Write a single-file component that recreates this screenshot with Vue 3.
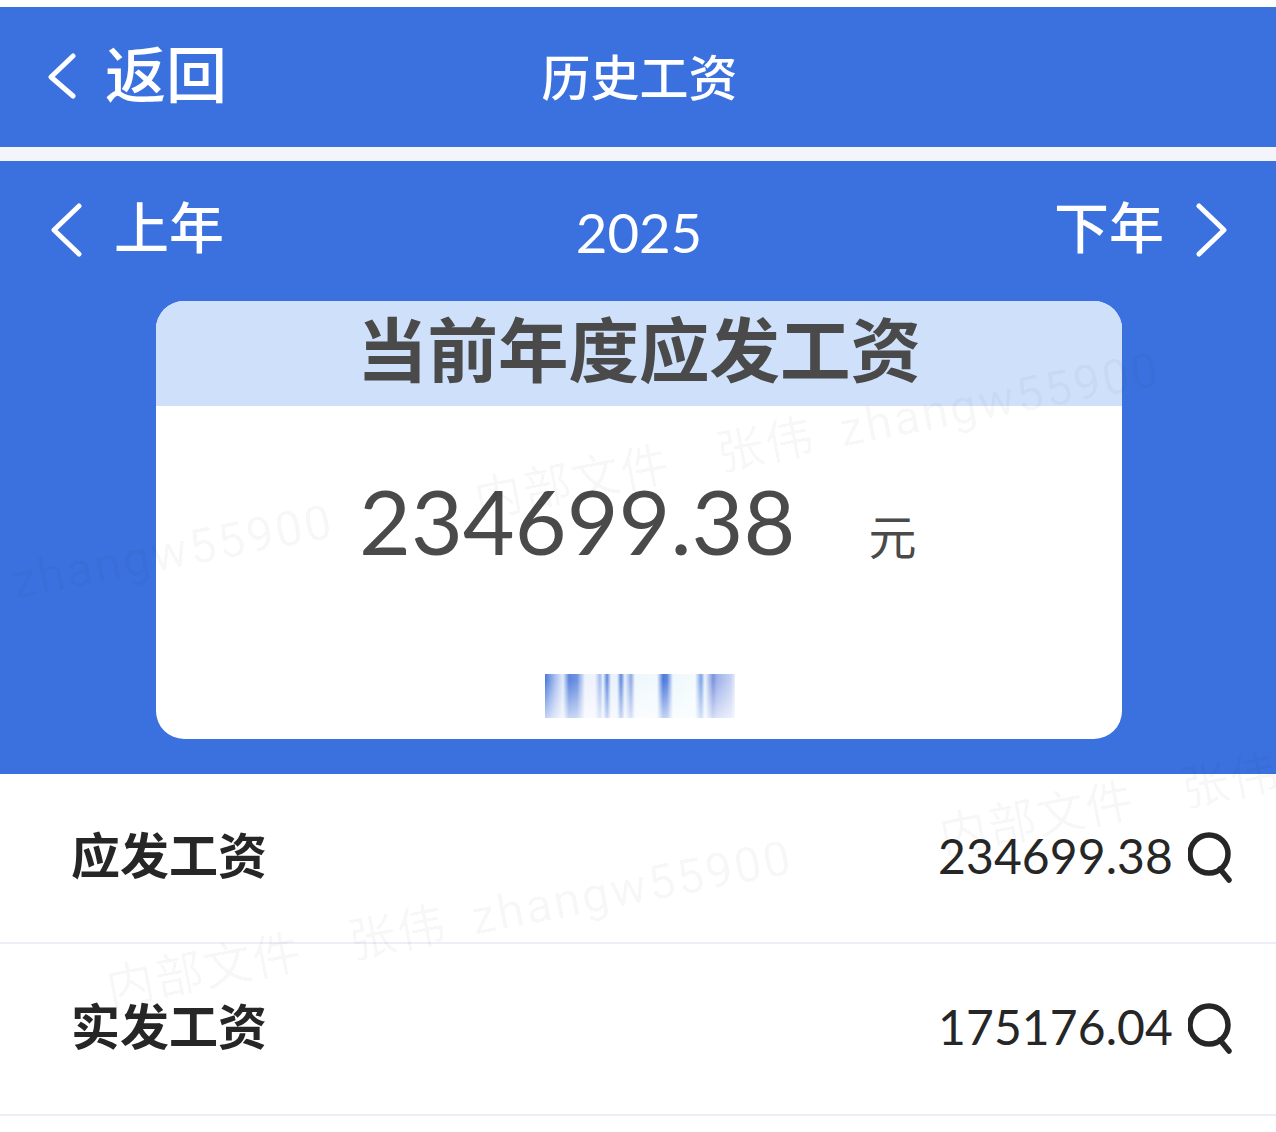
<template>
  <div class="page">
    <header class="topbar">
      <div class="back">
        <svg class="chev-sm" viewBox="0 0 30 46"><path d="M26 3 L4 24 L26 43" /></svg>
        <span>返回</span>
      </div>
      <div class="title">历史工资</div>
      <div></div>
    </header>

    <section class="hero">
      <div class="year-bar">
        <div class="year-btn">
          <svg class="chev" viewBox="0 0 34 54"><path d="M29 3 L4 27 L29 51" /></svg>
          <span>上年</span>
        </div>
        <div class="year">2025</div>
        <div class="year-btn next">
          <span>下年</span>
          <svg class="chev" viewBox="0 0 34 54"><path d="M5 3 L30 27 L5 51" /></svg>
        </div>
      </div>

      <div class="card">
        <div class="card-head">当前年度应发工资</div>
        <div class="card-amount">
          <span class="amount">234699.38</span>
          <span class="unit">元</span>
        </div>
        <div class="blurred"></div>
      </div>
    </section>

    <div class="rows">
      <div v-for="row in rows" :key="row.label" class="row">
        <span class="row-label">{{ row.label }}</span>
        <span class="row-value">
          <span class="row-num">{{ row.value }}</span>
          <svg class="search" viewBox="0 0 44 52">
            <circle cx="21" cy="22" r="19" />
            <path d="M32 37 L41 48" />
          </svg>
        </span>
      </div>
    </div>

    <div class="watermarks">
      <span
        v-for="(m, i) in marks"
        :key="i"
        class="mark"
        :style="{ left: m.x + 'px', top: m.y + 'px' }"
      >内部文件<i></i>张伟<b></b><em>zhangw55900</em></span>
    </div>
  </div>
</template>

<script setup>
const rows = [
  { label: "应发工资", value: "234699.38" },
  { label: "实发工资", value: "175176.04" },
];

const marks = [
  { x: -352, y: 624 },
  { x: 475, y: 472 },
  { x: 107, y: 960 },
  { x: 940, y: 808 },
];
</script>

<style>
html,
body {
  background: #fff;
}
</style>

<style scoped>
.page {
  position: relative;
  width: 1276px;
  height: 1132px;
  overflow: hidden;
  background: #fff;
  padding-top: 7px;
  box-sizing: border-box;
  font-family: "Lato", "Noto Sans CJK SC", sans-serif;
}
.topbar {
  height: 140px;
  background: #3b71de;
  color: #fff;
  display: grid;
  grid-template-columns: 1fr auto 1fr;
  align-items: center;
  padding: 0 47px;
  margin-bottom: 14px;
  box-shadow: 0 14px 0 #f3f5fa;
}
.back {
  display: flex;
  align-items: center;
  gap: 28px;
  font-size: 61px;
  font-weight: 500;
  line-height: 1;
  margin-top: -5px;
}
.title {
  font-size: 49px;
  font-weight: 500;
  line-height: 1;
  margin: 1px 0 0 3px;
}
.chev-sm {
  width: 30px;
  height: 46px;
  flex: none;
  margin-top: 3px;
}
.chev-sm path,
.chev path {
  fill: none;
  stroke: #fff;
  stroke-width: 5;
  stroke-linecap: round;
  stroke-linejoin: round;
}
.hero {
  height: 613px;
  background: #3b71de;
  display: flex;
  flex-direction: column;
  align-items: center;
}
.year-bar {
  align-self: stretch;
  height: 140px;
  display: flex;
  justify-content: space-between;
  align-items: center;
  padding: 0 48px 0 50px;
  color: #fff;
  font-size: 55px;
  box-sizing: border-box;
}
.year-btn {
  display: flex;
  align-items: center;
  gap: 30px;
  line-height: 1;
  font-weight: 500;
  margin-top: -2px;
}
.year-btn span {
  margin-top: -6px;
}
.year {
  font-size: 54.5px;
  line-height: 1;
  margin-top: 3px;
}
.chev {
  width: 34px;
  height: 54px;
  flex: none;
}
.card {
  width: 966px;
  height: 438px;
  margin-left: 2px;
  background: #fff;
  border-radius: 28px;
  overflow: hidden;
  display: flex;
  flex-direction: column;
  color: #4a4a4a;
}
.card-head {
  height: 105px;
  background: #cfe0fb;
  font-size: 70.5px;
  font-weight: 700;
  line-height: 97px;
  text-align: center;
  flex: none;
}
.card-amount {
  display: flex;
  align-items: baseline;
  padding: 54px 0 0 203px;
  line-height: 122px;
}
.amount {
  font-size: 89.5px;
}
.unit {
  font-size: 48px;
  margin-left: 73px;
}
.blurred {
  width: 190px;
  height: 44px;
  margin: 76px 0 0 389px;
  background:
    linear-gradient(180deg, rgba(255, 255, 255, 0) 15%, rgba(255, 255, 255, 0.65) 100%),
    linear-gradient(
      90deg,
      #4d7bdc 0,
      #a9bfee 10px,
      #e4ebfa 18px,
      #5b85dd 24px,
      #6f93e2 32px,
      #eef2fb 40px,
      #f0f3fb 50px,
      #a5bbee 55px,
      #eaf2fb 58px,
      #5f87df 62px,
      #eaf2fb 66px,
      #eaf2fb 72px,
      #5f87df 76px,
      #eaf2fb 80px,
      #8ea9e6 86px,
      #f0f7fc 90px,
      #f1f9fd 112px,
      #4d7bdc 118px,
      #5d85e0 122px,
      #eef8fc 128px,
      #f5fbfd 150px,
      #7da3e6 156px,
      #eef5fb 160px,
      #7d93df 168px,
      #9fb2ea 172px,
      #c6d2f3 186px,
      #e8edf9 190px
    );
}
.rows {
  background: #fff;
}
.row {
  height: 168px;
  border-bottom: 2px solid #eeeefa;
  display: flex;
  justify-content: space-between;
  align-items: center;
  padding: 0 44px 0 71px;
  color: #262626;
  font-size: 48px;
}
.row + .row {
  height: 170px;
}
.row-label {
  font-size: 49px;
  font-weight: 700;
  margin-top: -12px;
}
.row-value {
  display: flex;
  align-items: center;
  gap: 15px;
}
.row-num {
  margin-top: -6px;
  letter-spacing: 0.1px;
}
.search {
  width: 44px;
  height: 52px;
  fill: none;
  stroke: #262626;
  stroke-width: 5.5;
  stroke-linecap: round;
}
.watermarks {
  position: absolute;
  inset: 0;
  pointer-events: none;
}
.mark {
  position: absolute;
  display: flex;
  align-items: center;
  white-space: nowrap;
  font-family: "Roboto", "Noto Sans CJK SC", sans-serif;
  font-size: 48px;
  line-height: 60px;
  letter-spacing: 1.6px;
  color: rgba(0, 0, 0, 0.04);
  transform: rotate(-11deg);
  transform-origin: left center;
}
.mark i {
  width: 48px;
}
.mark b {
  width: 26px;
}
.mark em {
  font-style: normal;
  letter-spacing: 2.3px;
}
</style>
